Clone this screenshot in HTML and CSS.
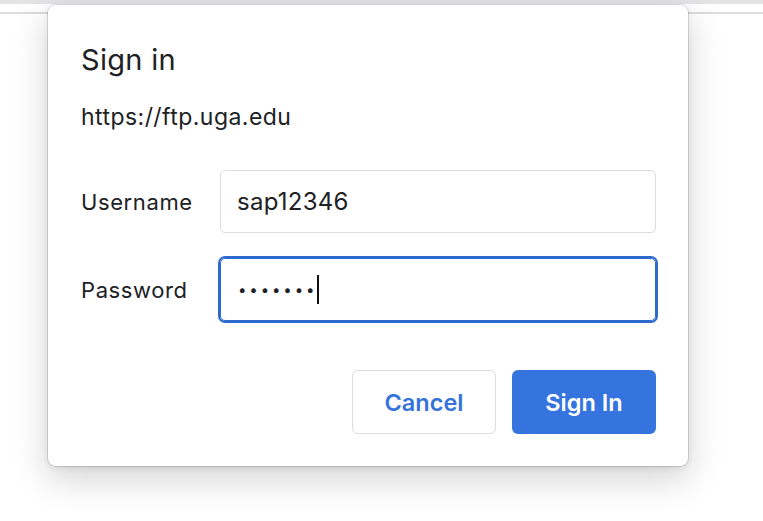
FILE: index.html
```html
<!DOCTYPE html>
<html lang="en">
<head>
<meta charset="utf-8">
<title>Sign in</title>
<link rel="stylesheet" href="styles.css">
</head>
<body>
<div class="page">
  <div class="topbar"></div>
  <div class="toolbar"></div>
</div>
<div class="dialog" role="dialog" aria-label="Sign in">
  <h1 class="title">Sign in</h1>
  <p class="origin">https://ftp.uga.edu</p>
  <div class="form">
    <label class="label">Username</label>
    <div class="field">sap12346</div>
    <label class="label">Password</label>
    <div class="field focused"><span class="dots">•••••••</span><span class="caret"></span></div>
  </div>
  <div class="actions">
    <button class="btn cancel">Cancel</button>
    <button class="btn primary">Sign In</button>
  </div>
</div>
</body>
</html>
```
FILE: styles.css
```css
html, body {
  margin: 0;
  padding: 0;
  background: #ffffff;
  font-family: Inter, "Liberation Sans", sans-serif;
  color: #202124;
}
.page {
  display: flex;
  flex-direction: column;
}
.topbar {
  height: 4px;
  background: #e3e4e6;
}
.toolbar {
  height: 8px;
  border-bottom: 2px solid #dcdcdc;
  background: #ffffff;
}
.dialog {
  position: absolute;
  left: 48px;
  top: 5px;
  width: 640px;
  height: 461px;
  box-sizing: border-box;
  padding: 37px 32px 32px 33px;
  background: #ffffff;
  border-radius: 8px;
  box-shadow: 0 0 0 1px rgba(0,0,0,0.12), 0 12px 36px rgba(0,0,0,0.18), 0 2px 6px rgba(0,0,0,0.08);
  display: flex;
  flex-direction: column;
}
.title {
  margin: 0;
  font-size: 29px;
  line-height: 36px;
  font-weight: 400;
  letter-spacing: 0.3px;
}
.origin {
  margin: 24px 0 0 0;
  font-size: 23px;
  line-height: 30px;
  letter-spacing: 0.45px;
}
.form {
  margin-top: 38px;
  display: grid;
  grid-template-columns: 139px 436px;
  row-gap: 25px;
  align-items: center;
}
.label {
  font-size: 22px;
  line-height: 28px;
  letter-spacing: 0.6px;
}
.field {
  height: 63px;
  box-sizing: border-box;
  border: 1px solid #dadce0;
  border-radius: 5px;
  padding: 0 16px;
  display: flex;
  align-items: center;
  font-size: 24px;
  letter-spacing: 0.25px;
}
.field.focused {
  border-color: #2e6acd;
  box-shadow: 0 0 0 2px #2e6acd;
  padding-left: 17px;
}
.dots {
  font-size: 15px;
  letter-spacing: 2.9px;
}
.caret {
  display: inline-block;
  width: 2px;
  height: 29px;
  background: #111;
  margin-left: 0;
}
.actions {
  margin-top: auto;
  display: flex;
  justify-content: flex-end;
  gap: 16px;
}
.btn {
  width: 144px;
  height: 64px;
  border-radius: 6px;
  font-family: Inter, "Liberation Sans", sans-serif;
  font-size: 23.5px;
  font-weight: 600;
  cursor: pointer;
}
.cancel {
  background: #ffffff;
  border: 1px solid #dadce0;
  color: #3473da;
}
.primary {
  background: #3574de;
  border: none;
  color: #ffffff;
}
```
